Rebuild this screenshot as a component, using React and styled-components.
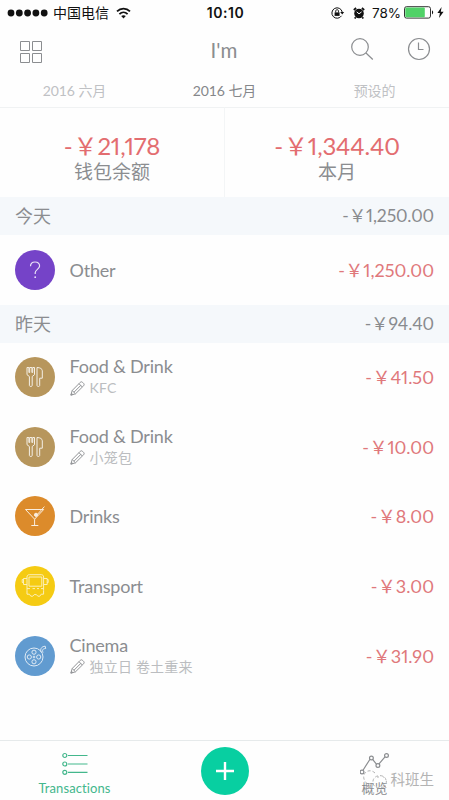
import React from 'react'
import styled, { createGlobalStyle } from 'styled-components'

const GlobalStyle = createGlobalStyle`
  body{
    margin: 0;
    background: #fefefe;
  }
  *{
    box-sizing: border-box;
  }
  svg{
    display: block;
    flex: none;
    fill: none;
    stroke: currentColor;
  }
`

const Screen = styled.div`
  width: 449px;
  height: 800px;
  display: flex;
  flex-direction: column;
  overflow: hidden;
  color: #8b8d90;
  font-family: Lato, "Noto Sans CJK SC", sans-serif;
  white-space: nowrap;
`

const StatusBar = styled.div`
  height: 24px;
  display: grid;
  grid-template-columns: 1fr auto 1fr;
  align-items: center;
  padding: 1px 5px 0 7px;
  color: #111;
  font: 14px/20px Inter, "Noto Sans CJK SC", sans-serif;
  strong{
    font-size: 14px;
    font-weight: 600;
    letter-spacing: .5px;
  }
`

const StatusGroup = styled.div`
  display: flex;
  align-items: center;
  justify-content: ${({ $end }) => $end ? 'flex-end' : 'flex-start'};
`

const Carrier = styled.span`
  margin: 0 7px 0 5px;
`

const Percent = styled.span`
  width: 29px;
  margin: 0 3px 0 7px;
  font-size: 13.5px;
`

const Header = styled.header`
  height: 52px;
  display: grid;
  grid-template-columns: 1fr auto 1fr;
  align-items: center;
  padding: 2px 18px 0 19px;
  h1{
    margin: 0;
    padding: 0 2px 2px 0;
    font-size: 20.5px;
    font-weight: 400;
    line-height: 26px;
  }
`

const Actions = styled.div`
  display: flex;
  justify-content: flex-end;
  gap: 33px;
  padding-bottom: 5px;
`

const Tabs = styled.nav`
  height: 31px;
  display: grid;
  grid-template-columns: repeat(3, 150px);
  justify-content: center;
  text-align: center;
`

const Tab = styled.span`
  font-size: 14px;
  line-height: 30px;
  letter-spacing: -.1px;
  color: ${({ $active }) => $active ? '#85878a' : '#bfc1c4'};
`

const Summary = styled.section`
  height: 90px;
  display: grid;
  grid-template-columns: 224px 1fr;
`

const SummaryCell = styled.div`
  display: flex;
  flex-direction: column;
  align-items: center;
  padding-top: 25px;
  border-top: 1px solid #f0f2f3;
  & + &{
    border-left: 1px solid #f3f5f6;
  }
`

const Total = styled.div`
  height: 26px;
  color: #e36d70;
  font-size: 24px;
  line-height: 26px;
  letter-spacing: -.15px;
  font-variant-numeric: proportional-nums;
`

const Minus = styled.span`
  margin-right: ${({ $gap }) => $gap || 0}px;
`

const Caption = styled.div`
  height: 25px;
  font-size: 19px;
  line-height: 25px;
`

const DayHeader = styled.div`
  height: 37.5px;
  flex: none;
  display: flex;
  align-items: center;
  justify-content: space-between;
  padding: 0 15px;
  background: #f5f8fb;
  font-size: 18px;
  line-height: 26px;
`

const Row = styled.div`
  height: ${({ $height }) => $height || 69.6}px;
  flex: none;
  display: flex;
  align-items: center;
  padding: 0 15px;
`

const Badge = styled.div`
  width: 40px;
  height: 40px;
  flex: none;
  display: grid;
  place-items: center;
  border-radius: 50%;
  background: ${({ $color }) => $color};
  color: #fff;
`

const Info = styled.div`
  flex: 1;
  margin-left: 14.5px;
`

const Name = styled.div`
  font-size: 18px;
  line-height: 22px;
  letter-spacing: -.2px;
`

const Note = styled.div`
  display: flex;
  align-items: center;
  gap: 5px;
  height: 22px;
  color: #bbbdc0;
  font-size: 14px;
  line-height: 22px;
  letter-spacing: .2px;
  svg{
    color: #929497;
  }
`

const Amount = styled.div`
  color: ${({ $muted }) => $muted ? '#898b8e' : '#e0787b'};
  font-size: ${({ $muted }) => $muted ? 17.5 : 18}px;
  line-height: 26px;
  letter-spacing: ${({ $muted }) => $muted ? -.1 : 0}px;
  font-variant-numeric: proportional-nums;
`

const BottomBar = styled.footer`
  height: 60px;
  margin-top: auto;
  display: grid;
  grid-template-columns: 149px 151px 149px;
  justify-items: center;
  border-top: 1px solid #e6eaeb;
`

const BottomItem = styled.div`
  position: relative;
  display: flex;
  flex-direction: column;
  align-items: center;
  gap: 4px;
  padding-top: 11px;
  color: ${({ $active }) => $active ? '#43b78c' : '#8b8d90'};
  font-size: 13px;
  line-height: 18px;
  letter-spacing: ${({ $active }) => $active ? .1 : 0}px;
`

const AddButton = styled.button`
  width: 48px;
  height: 48px;
  display: grid;
  place-items: center;
  margin-top: 6px;
  padding: 0;
  border: 0;
  border-radius: 50%;
  background: #08cfa1;
  color: #fff;
`

const Watermark = styled.div`
  position: absolute;
  top: 25px;
  left: 1px;
  display: flex;
  align-items: center;
  gap: 3px;
  color: #b3b3b3;
  font: 14.5px/26px "Noto Sans CJK SC", sans-serif;
  letter-spacing: 0;
`

const icons = {
  other: (
    <svg width="16" height="20" viewBox="0 0 16 20" strokeWidth="1.2" opacity=".85">
      <path d="M3.5 6.2C3.5 3.5 5.2 2 8 2s4.6 1.7 4.6 4.1c0 3.1-4.4 3.5-4.4 6.6v1.2" />
      <circle cx="8.2" cy="17.2" r=".9" fill="currentColor" stroke="none" />
    </svg>
  ),
  food: (
    <svg width="20" height="22" viewBox="0 0 20 22" strokeWidth="1" opacity=".85">
      <path d="M2 1.5v7.2l2.4 1.8v9c0 1.3 2.8 1.3 2.8 0v-9l2.3-1.8V1.5H7.7v5H6.9v-5H4.7v5H3.9v-5zM12 1.5v18c0 1.3 2.7 1.3 2.7 0v-7.3h2.6V4.8c0-2-2-3.2-5.3-3.3z" />
    </svg>
  ),
  drinks: (
    <svg width="22" height="22" viewBox="0 0 22 22" strokeWidth="1" opacity=".85">
      <path d="M1.5 4.5h18.2L10.6 14.2zM10.6 14.2v6M7.3 20.5h7M13 9.8l7.4-8.2" />
      <circle cx="12" cy="9.8" r="1.6" fill="currentColor" />
    </svg>
  ),
  transport: (
    <svg width="28" height="26" viewBox="0 0 28 26" strokeWidth="1" opacity=".7">
      <path d="M6 17.5V4c0-1.5.8-2.3 2.3-2.3h12c1.5 0 2.3.8 2.3 2.3v13.5M8 4h12.8v9.2H8zM6 5.5H2.5v6H6M2.5 6.5H1.2v3h1.3M22.6 5.5h3.6v6h-3.6M26.2 6.5h1v3h-1M6 17.5v3.7h2.4l1.4 2h2l1.4-1.6h2.2l1.4 1.6h2l1.4-2h2.4v-3.7M6 15.6h3M11.5 15.6H14M16 15.6h2M20 15.6h2.6" />
    </svg>
  ),
  cinema: (
    <svg width="24" height="24" viewBox="0 0 24 24" strokeWidth="1" opacity=".8">
      <path d="M18 8c-.9-3 .3-5.5 4.2-5.8l.5 2.3c-3.2.3-3.6 1.3-2.7 4.2" />
      <circle cx="11" cy="13" r="9" />
      <circle cx="11" cy="8.2" r="2.1" />
      <circle cx="11" cy="17.8" r="2.1" />
      <circle cx="6.3" cy="13" r="2.1" />
      <circle cx="15.7" cy="13" r="2.1" />
      <circle cx="11" cy="13" r=".9" />
    </svg>
  )
}

const days = [
  {
    label: '今天',
    total: '1,250.00',
    items: [
      { icon: 'other', color: '#7543c8', name: 'Other', amount: '1,250.00', height: 70.5 }
    ]
  },
  {
    label: '昨天',
    total: '94.40',
    items: [
      { icon: 'food', color: '#b7965c', name: 'Food & Drink', note: 'KFC', amount: '41.50' },
      { icon: 'food', color: '#b7965c', name: 'Food & Drink', note: '小笼包', amount: '10.00' },
      { icon: 'drinks', color: '#dc8b2b', name: 'Drinks', amount: '8.00' },
      { icon: 'transport', color: '#f5cb13', name: 'Transport', amount: '3.00' },
      { icon: 'cinema', color: '#619bd0', name: 'Cinema', note: '独立日 卷土重来', amount: '31.90' }
    ]
  }
]

function Pencil() {
  return (
    <svg width="15" height="15" viewBox="0 0 15 15" strokeWidth="1">
      <path d="M.8 14.2l1.4-4.7 8-8.1c.8-.8 1.7-.8 2.4 0l1 1c.7.7.7 1.6 0 2.4l-8.1 8zM2.2 9.5l3.3 3.3M9 2.7l3.3 3.3M4 11.2l7-7M1 14l1.8-.5-1.2-1.2z" />
    </svg>
  )
}

function Status() {
  return (
    <StatusBar>
      <StatusGroup>
        <svg width="41" height="8" viewBox="0 0 41 8">
          {[4, 12.3, 20.6, 28.9, 37.2].map(x => <circle key={x} cx={x} cy="4" r="3.4" fill="#111" stroke="none" />)}
        </svg>
        <Carrier>中国电信</Carrier>
        <svg width="15" height="12" viewBox="0 0 15 12" strokeWidth="1.8">
          <path d="M1 4.4c3.7-3.7 9.3-3.7 13 0M3.4 7.1c2.4-2.3 5.8-2.3 8.2 0" />
          <path d="M5.2 9.1c1.4-1.2 3.2-1.2 4.6 0l-2.3 2.4z" fill="currentColor" stroke="none" />
        </svg>
      </StatusGroup>
      <strong>10:10</strong>
      <StatusGroup $end>
        <svg width="14" height="12" viewBox="0 0 14 12">
          <path d="M10.5 8.8A5.2 5.2 0 1 1 11.2 5" strokeWidth="1" />
          <path d="M9.2 5h4l-2 2.6z" fill="currentColor" stroke="none" />
          <path d="M3.6 5.4h5v3.5h-5z" fill="currentColor" stroke="none" />
          <path d="M4.7 5.5V4.2c0-2 2.8-2 2.8 0v1.3" strokeWidth="1" />
        </svg>
        <svg width="12" height="12" viewBox="0 0 12 12" style={{ marginLeft: 8 }}>
          <circle cx="6" cy="6.5" r="4.8" fill="currentColor" stroke="none" />
          <path d="M.8 3l2.3-2M11.2 3L8.9 1M2.7 10.2l-1 1.3M9.3 10.2l1 1.3" strokeWidth="1.7" />
          <path d="M3.7 4.9L6 6.8l2.6-1.9" stroke="#fff" strokeWidth="1" />
        </svg>
        <Percent>78%</Percent>
        <svg width="30" height="13" viewBox="0 0 30 13">
          <rect x=".5" y=".7" width="26" height="11.4" rx="2" strokeWidth="1" stroke="#333" />
          <rect x="1.3" y="1.5" width="19.5" height="9.8" rx="1" fill="#50d267" stroke="none" />
          <path d="M28 4.3c1.6.8 1.6 3.4 0 4.2z" fill="currentColor" stroke="none" />
        </svg>
        <svg width="7" height="11" viewBox="0 0 7 11" style={{ marginLeft: 3 }}>
          <path d="M4.6 0L.4 6h2.5L2 11l4.6-6.3H3.8z" fill="currentColor" stroke="none" />
        </svg>
      </StatusGroup>
    </StatusBar>
  )
}

export default function App() {
  return (
    <>
      <GlobalStyle />
      <Screen>
        <Status />
        <Header>
          <svg width="24" height="24" viewBox="0 0 24 24" strokeWidth="1">
            <path d="M1.5 2.5h9v9h-9zM13.5 2.5h9v9h-9zM1.5 14.5h9v9h-9zM13.5 14.5h9v9h-9z" />
          </svg>
          <h1>I'm</h1>
          <Actions>
            <svg width="24" height="24" viewBox="0 0 24 24" strokeWidth="1.2">
              <circle cx="10" cy="10" r="8.3" />
              <path d="M16 16l6.8 6.5" />
            </svg>
            <svg width="24" height="24" viewBox="0 0 24 24" strokeWidth="1.2">
              <circle cx="12" cy="12" r="10.5" />
              <path d="M11.5 5.5v7h5" />
            </svg>
          </Actions>
        </Header>
        <Tabs>
          <Tab>2016 六月</Tab>
          <Tab $active>2016 七月</Tab>
          <Tab>预设的</Tab>
        </Tabs>
        <Summary>
          <SummaryCell>
            <Total><Minus $gap={1}>-</Minus>￥21,178</Total>
            <Caption>钱包余额</Caption>
          </SummaryCell>
          <SummaryCell>
            <Total><Minus $gap={1}>-</Minus>￥1,344.40</Total>
            <Caption>本月</Caption>
          </SummaryCell>
        </Summary>
        {days.map(day => (
          <React.Fragment key={day.label}>
            <DayHeader>
              <span>{day.label}</span>
              <Amount $muted><Minus>-</Minus>￥{day.total}</Amount>
            </DayHeader>
            {day.items.map((item, i) => (
              <Row key={i} $height={item.height}>
                <Badge $color={item.color}>{icons[item.icon]}</Badge>
                <Info>
                  <Name>{item.name}</Name>
                  {item.note && <Note><Pencil />{item.note}</Note>}
                </Info>
                <Amount><Minus $gap={.5}>-</Minus>￥{item.amount}</Amount>
              </Row>
            ))}
          </React.Fragment>
        ))}
        <BottomBar>
          <BottomItem $active>
            <svg width="28" height="23" viewBox="0 0 28 23" strokeWidth="1.2">
              <path d="M7 3.5h19.5M7 12h19.5M7 20.3h19.5" />
              <circle cx="3.8" cy="3.5" r="2" />
              <circle cx="3.8" cy="12" r="2" />
              <circle cx="3.8" cy="20.3" r="2" />
            </svg>
            Transactions
          </BottomItem>
          <AddButton>
            <svg width="18" height="18" viewBox="0 0 18 18" strokeWidth="2.4">
              <path d="M9 0v18M0 9h18" />
            </svg>
          </AddButton>
          <BottomItem>
            <svg width="30" height="23" viewBox="0 0 30 23" strokeWidth="1.2">
              <path d="M3 18.2l7-11M12.6 7.3l4 5M18.8 12.1l6.2-7.3" />
              <circle cx="2" cy="20" r="1.9" />
              <circle cx="11.4" cy="6" r="1.9" />
              <circle cx="17.9" cy="13.5" r="1.9" />
              <circle cx="26.5" cy="3.5" r="1.9" />
            </svg>
            概览
            <Watermark>
              <svg width="27" height="25" viewBox="0 0 27 25" strokeWidth="1" strokeDasharray="3 2">
                <path d="M14 6C9 1 1 5 3 12c1 3 2 4 4 5l-1 3 4-2" />
                <path d="M25 13c-1-6-12-6-13 1s7 8 10 6l3 1-1-3c1-1 2-3 1-5zM16 10h2M22 10h1" />
              </svg>
              科班生
            </Watermark>
          </BottomItem>
        </BottomBar>
      </Screen>
    </>
  )
}
